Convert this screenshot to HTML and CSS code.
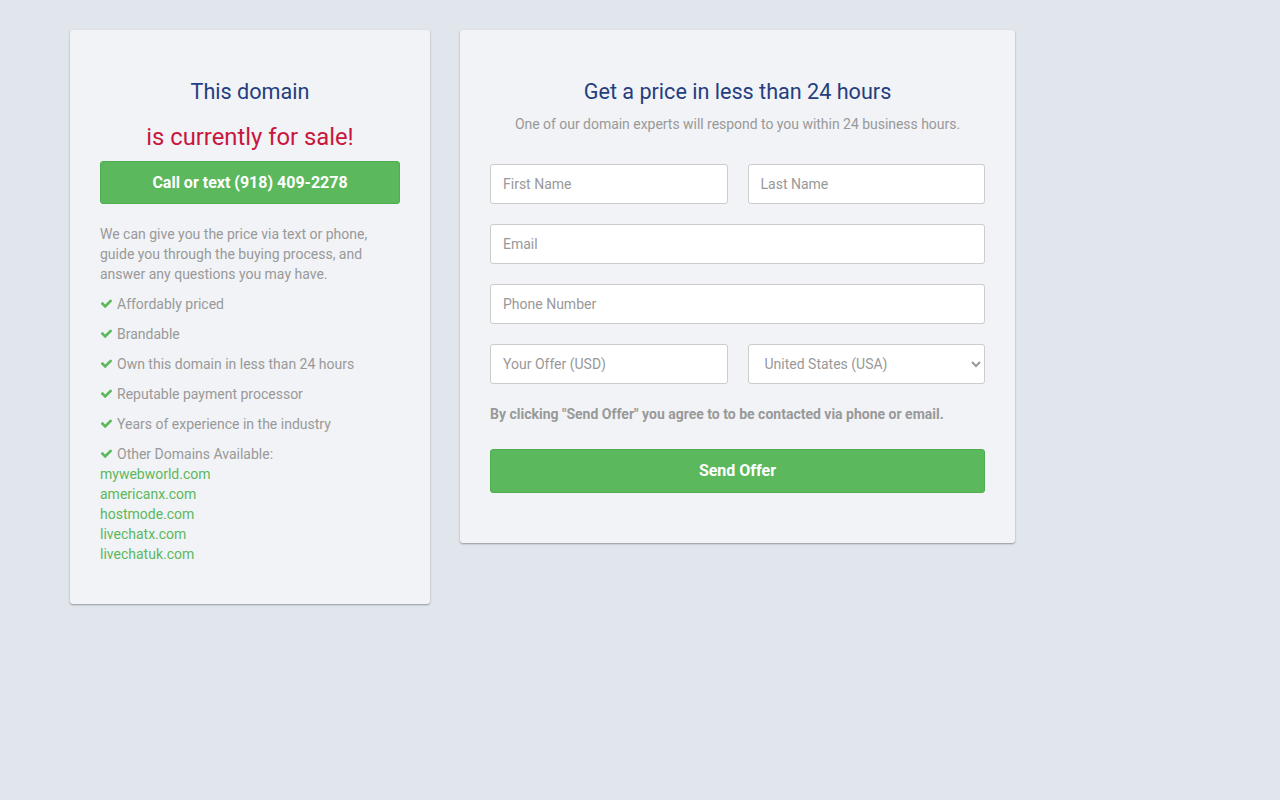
FILE: index.html
```html
<!DOCTYPE html>
<html lang="en">
<head>
<meta charset="utf-8">
<title>Domain for sale</title>
<link rel="stylesheet" href="styles.css">
</head>
<body>
<div class="page">
  <div class="card card-left">
    <h2 class="title">This domain</h2>
    <h2 class="title-red">is currently for sale!</h2>
    <a class="btn btn-call" href="#">Call or text (918) 409-2278</a>
    <p class="lead">We can give you the price via text or phone, guide you through the buying process, and answer any questions you may have.</p>
    <ul class="features">
      <li><svg class="check" viewBox="0 0 1792 1792"><path d="M1671 566q0 40-28 68l-724 724-136 136q-28 28-68 28t-68-28l-136-136-362-362q-28-28-28-68t28-68l136-136q28-28 68-28t68 28l294 295 656-657q28-28 68-28t68 28l136 136q28 28 28 68z"/></svg>Affordably priced</li>
      <li><svg class="check" viewBox="0 0 1792 1792"><path d="M1671 566q0 40-28 68l-724 724-136 136q-28 28-68 28t-68-28l-136-136-362-362q-28-28-28-68t28-68l136-136q28-28 68-28t68 28l294 295 656-657q28-28 68-28t68 28l136 136q28 28 28 68z"/></svg>Brandable</li>
      <li><svg class="check" viewBox="0 0 1792 1792"><path d="M1671 566q0 40-28 68l-724 724-136 136q-28 28-68 28t-68-28l-136-136-362-362q-28-28-28-68t28-68l136-136q28-28 68-28t68 28l294 295 656-657q28-28 68-28t68 28l136 136q28 28 28 68z"/></svg>Own this domain in less than 24 hours</li>
      <li><svg class="check" viewBox="0 0 1792 1792"><path d="M1671 566q0 40-28 68l-724 724-136 136q-28 28-68 28t-68-28l-136-136-362-362q-28-28-28-68t28-68l136-136q28-28 68-28t68 28l294 295 656-657q28-28 68-28t68 28l136 136q28 28 28 68z"/></svg>Reputable payment processor</li>
      <li><svg class="check" viewBox="0 0 1792 1792"><path d="M1671 566q0 40-28 68l-724 724-136 136q-28 28-68 28t-68-28l-136-136-362-362q-28-28-28-68t28-68l136-136q28-28 68-28t68 28l294 295 656-657q28-28 68-28t68 28l136 136q28 28 28 68z"/></svg>Years of experience in the industry</li>
      <li><svg class="check" viewBox="0 0 1792 1792"><path d="M1671 566q0 40-28 68l-724 724-136 136q-28 28-68 28t-68-28l-136-136-362-362q-28-28-28-68t28-68l136-136q28-28 68-28t68 28l294 295 656-657q28-28 68-28t68 28l136 136q28 28 28 68z"/></svg>Other Domains Available:
        <div class="domains">
          <a href="#">mywebworld.com</a>
          <a href="#">americanx.com</a>
          <a href="#">hostmode.com</a>
          <a href="#">livechatx.com</a>
          <a href="#">livechatuk.com</a>
        </div>
      </li>
    </ul>
  </div>

  <div class="card card-right">
    <h2 class="title">Get a price in less than 24 hours</h2>
    <p class="sub">One of our domain experts will respond to you within 24 business hours.</p>
    <form class="form">
      <div class="row two">
        <input class="field" type="text" placeholder="First Name">
        <input class="field" type="text" placeholder="Last Name">
      </div>
      <div class="row">
        <input class="field" type="email" placeholder="Email">
      </div>
      <div class="row">
        <input class="field" type="text" placeholder="Phone Number">
      </div>
      <div class="row two">
        <input class="field" type="text" placeholder="Your Offer (USD)">
        <select class="field select">
          <option>United States (USA)</option>
        </select>
      </div>
      <p class="note">By clicking "Send Offer" you agree to to be contacted via phone or email.</p>
      <button class="btn btn-send" type="button">Send Offer</button>
    </form>
  </div>
</div>
</body>
</html>
```

FILE: styles.css
```css
* { box-sizing: border-box; }

html, body {
  margin: 0;
  padding: 0;
  background: #e1e6ed;
  font-family: Roboto, "Liberation Sans", sans-serif;
  font-size: 14px;
  color: #999;
}

.page {
  display: flex;
  align-items: flex-start;
  gap: 30px;
  padding: 30px 70px;
}

.card {
  background: #f1f3f6;
  border-radius: 3px;
  box-shadow: 0 1px 2px rgba(0, 0, 0, 0.35);
  padding: 49px 30px 40px;
}

.card-left { width: 360px; }
.card-right { width: 555px; padding-bottom: 50px; }

.title {
  margin: 0;
  font-size: 21.6px;
  font-weight: 400;
  line-height: 25px;
  color: #253e80;
  text-align: center;
}

.title-red {
  margin: 19px 0 0;
  font-size: 23.8px;
  font-weight: 400;
  line-height: 29px;
  color: #c8163c;
  text-align: center;
}

.btn {
  display: flex;
  align-items: center;
  justify-content: center;
  width: 100%;
  background: #5cb85c;
  color: #fff;
  font-family: Roboto, "Liberation Sans", sans-serif;
  font-weight: 700;
  font-size: 16px;
  text-decoration: none;
  border: 1px solid #4cae4c;
  border-radius: 3px;
}

.btn-call {
  margin-top: 9px;
  height: 43px;
}

.lead {
  margin: 20px 0 0;
  line-height: 20px;
}

.features {
  list-style: none;
  margin: 10px 0 0;
  padding: 0;
  display: flex;
  flex-direction: column;
  gap: 10px;
}

.features li {
  line-height: 20px;
}

.check {
  width: 13px;
  height: 13px;
  fill: #5cb85c;
  margin-right: 4px;
  vertical-align: -1px;
}

.domains {
  display: flex;
  flex-direction: column;
}

.domains a {
  color: #5cb85c;
  text-decoration: none;
  line-height: 20px;
}

.sub {
  margin: 10px 0 0;
  line-height: 20px;
  text-align: center;
  letter-spacing: -0.03px;
}

.form {
  margin-top: 30px;
  display: flex;
  flex-direction: column;
  gap: 20px;
}

.row {
  display: grid;
  grid-template-columns: 1fr;
}

.row.two {
  grid-template-columns: 1fr 1fr;
  column-gap: 20px;
}

.field {
  width: 100%;
  min-width: 0;
  height: 40px;
  border: 1px solid #ccc;
  border-radius: 3px;
  background: #fff;
  padding: 0 12px;
  font-family: Roboto, "Liberation Sans", sans-serif;
  font-size: 14px;
  color: #999;
}

.field::placeholder { color: #999; }

.select {
  padding: 0 8px 0 12px;
}

.note {
  margin: 0;
  font-weight: 700;
  line-height: 20px;
}

.btn-send {
  margin-top: 5px;
  height: 44px;
  padding-bottom: 3px;
}
```
